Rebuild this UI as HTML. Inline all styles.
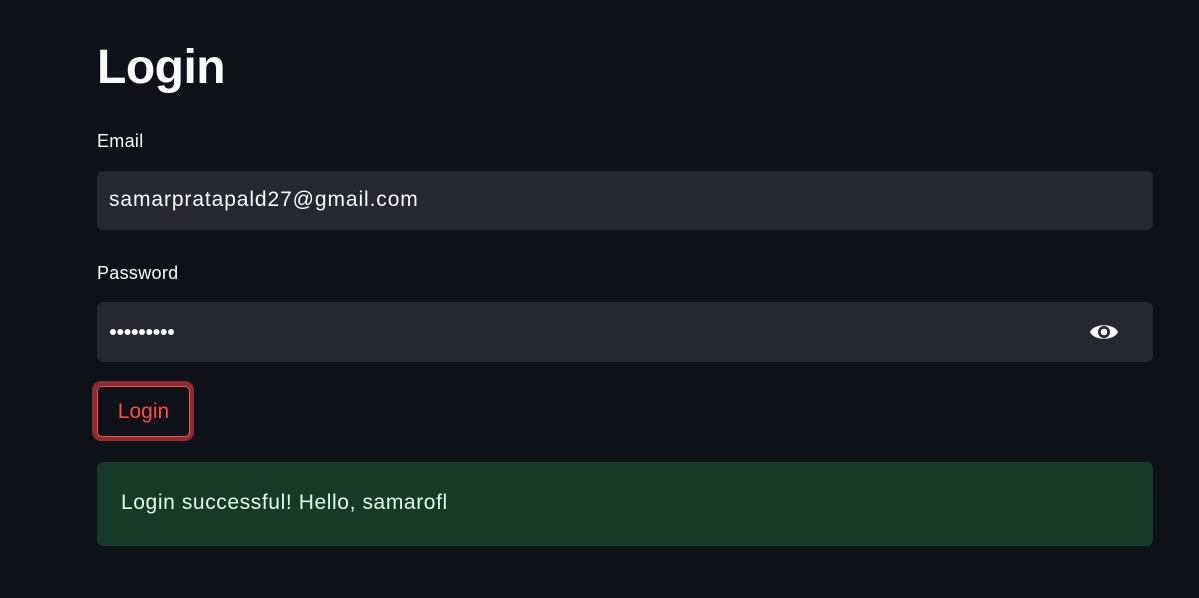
<!DOCTYPE html>
<html><head><style>
body{margin:0;width:1199px;height:598px;background:#0e1117;font-family:"Liberation Sans",sans-serif;color:#fafafa;position:relative;overflow:hidden}
.a{position:absolute}
h1{position:absolute;left:97px;top:36px;margin:0;font-size:48px;font-weight:bold;line-height:64px;letter-spacing:-0.5px}
.lbl{font-size:18px;line-height:20px;letter-spacing:0.3px}
.inp{left:97px;width:1056px;background:#262730;border-radius:6px}
</style></head><body>
<h1>Login</h1>
<div class="a lbl" style="left:97px;top:131px">Email</div>
<div class="a inp" style="top:171px;height:59px"><span class="a" style="left:12px;top:17px;font-size:21px;letter-spacing:0.9px;line-height:24px;white-space:nowrap">samarpratapald27@gmail.com</span></div>
<div class="a lbl" style="left:97px;top:263px">Password</div>
<div class="a inp" style="top:302px;height:60px">
<svg class="a" style="left:13px;top:26px" width="66" height="8" viewBox="0 0 66 8"><g fill="#fafafa"><circle cx="3" cy="4" r="3"/><circle cx="10.25" cy="4" r="3"/><circle cx="17.5" cy="4" r="3"/><circle cx="24.75" cy="4" r="3"/><circle cx="32" cy="4" r="3"/><circle cx="39.25" cy="4" r="3"/><circle cx="46.5" cy="4" r="3"/><circle cx="53.75" cy="4" r="3"/><circle cx="61" cy="4" r="3"/></g></svg>
<svg class="a" style="left:992px;top:19px" width="30" height="22" viewBox="0 0 30 22"><path d="M1 11C5 2 25 2 29 11C25 20 5 20 1 11Z" fill="#fafafa"/><circle cx="15" cy="11" r="6" fill="#262730"/><circle cx="15" cy="11" r="3.3" fill="#fafafa"/></svg></div>
<div class="a" style="left:92px;top:381px;width:92px;height:50px;border:5px solid #8a2e33;border-radius:9px"></div>
<div class="a" style="left:97px;top:386px;width:91px;height:49px;border:1px solid #ff4b4b;border-radius:5px;background:#0e1117;color:#ff4b4b;font-size:21px;line-height:49px;text-align:center">Login</div>
<div class="a" style="left:97px;top:462px;width:1056px;height:84px;background:#173928;border-radius:6px"><span class="a" style="left:24px;top:29px;font-size:21px;letter-spacing:0.6px;line-height:24px;color:#dffde9;white-space:nowrap">Login successful! Hello, samarofl</span></div>
</body></html>
